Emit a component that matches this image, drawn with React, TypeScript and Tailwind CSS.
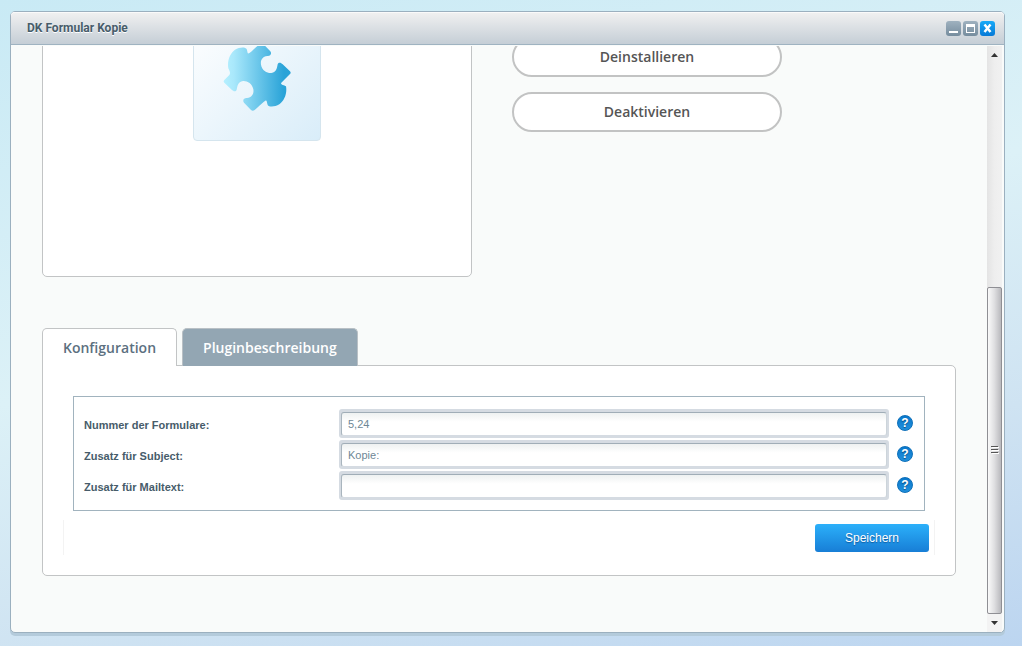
import { useState } from "react";

const fields = [
  { id: "form-ids", label: "Nummer der Formulare:", value: "5,24" },
  { id: "subject", label: "Zusatz für Subject:", value: "Kopie:" },
  { id: "mailtext", label: "Zusatz für Mailtext:", value: "" },
];

function PuzzleIcon() {
  return (
    <svg viewBox="42 -78 378 378" className="h-full w-full" aria-hidden="true">
      <defs>
        <linearGradient id="puzzle" x1="0" x2="1" y1="0" y2="0">
          <stop offset="0" stopColor="#b5f0ff" />
          <stop offset="0.15" stopColor="#a9e8fb" />
          <stop offset="0.9" stopColor="#29a3d8" />
          <stop offset="1" stopColor="#29a3d8" />
        </linearGradient>
      </defs>
      <path
        fill="url(#puzzle)"
        d="M133 128Q129 124 133 120L148 105C153 98 147 91 145 85C141 62 150 40 165 29C178 21 196 20 200 27C203 36 202 42 207 40C212 38 225 24 239 12Q245 7 250 12L271 34C277 42 270 49 262 48C246 50 241 62 243 74C246 92 262 100 274 99C290 97 291 82 293 73C296 66 303 68 308 73L330 94Q334 98 330 102L304 128C300 134 312 134 318 139C322 160 313 182 298 193C285 201 267 202 263 195C260 186 261 180 256 182C251 184 238 198 224 210Q218 215 213 210L192 188C186 180 193 173 201 174C217 172 222 160 220 148C217 130 201 122 189 123C173 125 172 140 170 149C167 156 160 154 155 149Z"
      />
    </svg>
  );
}

function TitleBar() {
  const button = "size-[15px] rounded-[3px] bg-linear-to-b from-[#9fb1bf] to-[#768d9e]";
  return (
    <header className="flex h-[33px] shrink-0 items-center justify-between rounded-t border-b border-[#9fb3c1] bg-linear-to-b from-[#f1f1f1] to-[#c5ced6] pr-[9px] pl-4 shadow-[inset_0_1px_0_#fafafa]">
      <h1 className="font-[Roboto,sans-serif] text-xs font-bold text-[#475c6a] [text-shadow:0_1px_0_#fff]">
        DK Formular Kopie
      </h1>
      <div className="flex gap-0.5">
        <button type="button" aria-label="Minimieren" className={button}>
          <svg viewBox="0 0 15 15">
            <path fill="#fff" d="M3 10h9v2H3z" />
          </svg>
        </button>
        <button type="button" aria-label="Maximieren" className={button}>
          <svg viewBox="0 0 15 15">
            <path fill="#fff" fillRule="evenodd" d="M3 3h9v9H3zM4 6v5h7V6z" />
          </svg>
        </button>
        <button
          type="button"
          aria-label="Schließen"
          className="size-[15px] rounded-[3px] bg-linear-to-b from-[#18aaf8] to-[#0879d6]"
        >
          <svg viewBox="0 0 15 15">
            <path fill="none" stroke="#fff" strokeWidth="2.500" d="M4.500 3.500l6 7.500M10.500 3.500l-6 7.500" />
          </svg>
        </button>
      </div>
    </header>
  );
}

function ScrollBar() {
  return (
    <div className="mr-0.5 flex w-[15px] shrink-0 flex-col bg-linear-to-r from-[#e4e4e4] via-[#eeeeee] to-[#f1f1f1]">
      <div className="flex h-[18px] shrink-0 items-center justify-center">
        <svg viewBox="0 0 7 4" className="h-1 w-[7px]">
          <path fill="#333" d="M3.500 0L7 4H0z" />
        </svg>
      </div>
      <div className="grow-[224] basis-0" />
      <div className="flex grow-[326] basis-0 items-center justify-center rounded-xs border border-[#8f8f94] bg-linear-to-r from-[#fafafa] via-[#dedee0] to-[#b9b9bd]">
        <svg viewBox="0 0 8 9" className="h-[9px] w-2">
          <path stroke="#555" d="M0 .5h7M0 3.500h7M0 6.500h7" />
          <path stroke="#fff" d="M1 1.500h7M1 4.500h7M1 7.500h7" />
        </svg>
      </div>
      <div className="flex h-[18px] shrink-0 items-center justify-center bg-[#f3f3f3]">
        <svg viewBox="0 0 7 4" className="h-1 w-[7px]">
          <path fill="#333" d="M0 0h7L3.500 4z" />
        </svg>
      </div>
    </div>
  );
}

function ConfigForm() {
  return (
    <form className="px-5 pt-[30px] pb-5" onSubmit={(e) => e.preventDefault()}>
      <fieldset className="mx-2.5 flex flex-col gap-0.5 border border-[#a1b3be] px-2.5 pt-3 pb-2.5">
        {fields.map((f) => (
          <div key={f.id} className="flex h-[29px] items-center">
            <label htmlFor={f.id} className="w-[255px] shrink-0 pt-1 text-[11px] font-bold text-[#475c6a]">
              {f.label}
            </label>
            <div className="min-w-0 flex-1 rounded-[3px] bg-[#d5dbe2] px-0.5 pt-[3px] pb-0.5">
              <input
                id={f.id}
                type="text"
                defaultValue={f.value}
                className="block h-6 w-full rounded-[3px] border border-t-[#a0adb7] border-r-[#ccd4da] border-b-[#d5dbe2] border-l-[#a9b5be] bg-linear-to-b from-[#eef1f1] to-white to-40% px-1.5 text-[11px] text-[#6e8796] outline-none"
              />
            </div>
            <button
              type="button"
              aria-label={`Hilfe: ${f.label}`}
              className="mr-px mb-px ml-2 flex size-4 shrink-0 items-center justify-center rounded-full border border-[#0d6fb9] bg-linear-to-b from-[#0878cc] to-[#2090dc] text-xs font-bold text-white [text-shadow:0_1px_1px_#0a4f88]"
            >
              ?
            </button>
          </div>
        ))}
      </fieldset>
      <div className="mt-[9px] flex h-[35px] items-center justify-end border-x border-[#f3f3f3] pr-[5px]">
        <button
          type="submit"
          className="h-7 w-[114px] rounded-[3px] bg-linear-to-b from-[#2cb0fa] to-[#187ed6] text-xs text-white [text-shadow:0_1px_1px_#0f5c9f]"
        >
          Speichern
        </button>
      </div>
    </form>
  );
}

export default function App() {
  const [tab, setTab] = useState("config");
  const tabBase = "h-[38px] rounded-t-[5px] border border-b-0 px-5 font-['Open_Sans',sans-serif] text-sm font-semibold";
  const active = "bg-white border-[#c2c4c5] text-[#5c7080]";
  const inactive = "bg-[#93a6b3] border-[#b9c0c5] text-white";
  const action =
    "h-10 w-full rounded-full border-2 border-[#c2c3c3] bg-white font-['Open_Sans',sans-serif] text-sm font-semibold text-[#555]";

  return (
    <div className="flex h-screen flex-col bg-[linear-gradient(166deg,#c9eaf5_0%,#dcf1f7_45%,#cfe3f2_73%,#bcd5f0_100%)] pt-[11px] pr-[17px] pb-[13px] pl-2.5 font-['Liberation_Sans',Arial,sans-serif]">
      <div className="flex min-h-0 flex-1 flex-col rounded-[5px] border border-[#9bb0bf] bg-[#f9fbfa] shadow-[0_3px_0_#b4cbdb]">
        <TitleBar />
        <div className="mt-px flex min-h-0 flex-1">
          <main className="flex min-w-0 flex-1 flex-col justify-end overflow-hidden pr-[31px] pb-14 pl-[31px]">
            <section className="flex shrink-0 gap-10">
              <div className="flex h-[400px] w-[430px] shrink-0 items-center justify-center rounded-[5px] border border-[#c2c4c5] bg-white">
                <div className="size-32 rounded border border-[#d5e5ee] bg-linear-to-br from-white to-[#d9edf9]">
                  <PuzzleIcon />
                </div>
              </div>
              <div className="flex w-[270px] flex-col justify-end gap-[15px] pb-[145px]">
                <button type="button" className={action}>
                  Deinstallieren
                </button>
                <button type="button" className={action}>
                  Deaktivieren
                </button>
              </div>
            </section>
            <div role="tablist" className="z-10 mt-[51px] -mb-px flex shrink-0 gap-[5px]">
              <button
                type="button"
                role="tab"
                aria-selected={tab === "config"}
                onClick={() => setTab("config")}
                className={`${tabBase} ${tab === "config" ? active : inactive}`}
              >
                Konfiguration
              </button>
              <button
                type="button"
                role="tab"
                aria-selected={tab === "info"}
                onClick={() => setTab("info")}
                className={`${tabBase} ${tab === "info" ? active : inactive}`}
              >
                Pluginbeschreibung
              </button>
            </div>
            <section className="shrink-0 rounded-[5px] rounded-tl-none border border-[#c2c4c5] bg-white">
              <ConfigForm />
            </section>
          </main>
          <ScrollBar />
        </div>
      </div>
    </div>
  );
}
